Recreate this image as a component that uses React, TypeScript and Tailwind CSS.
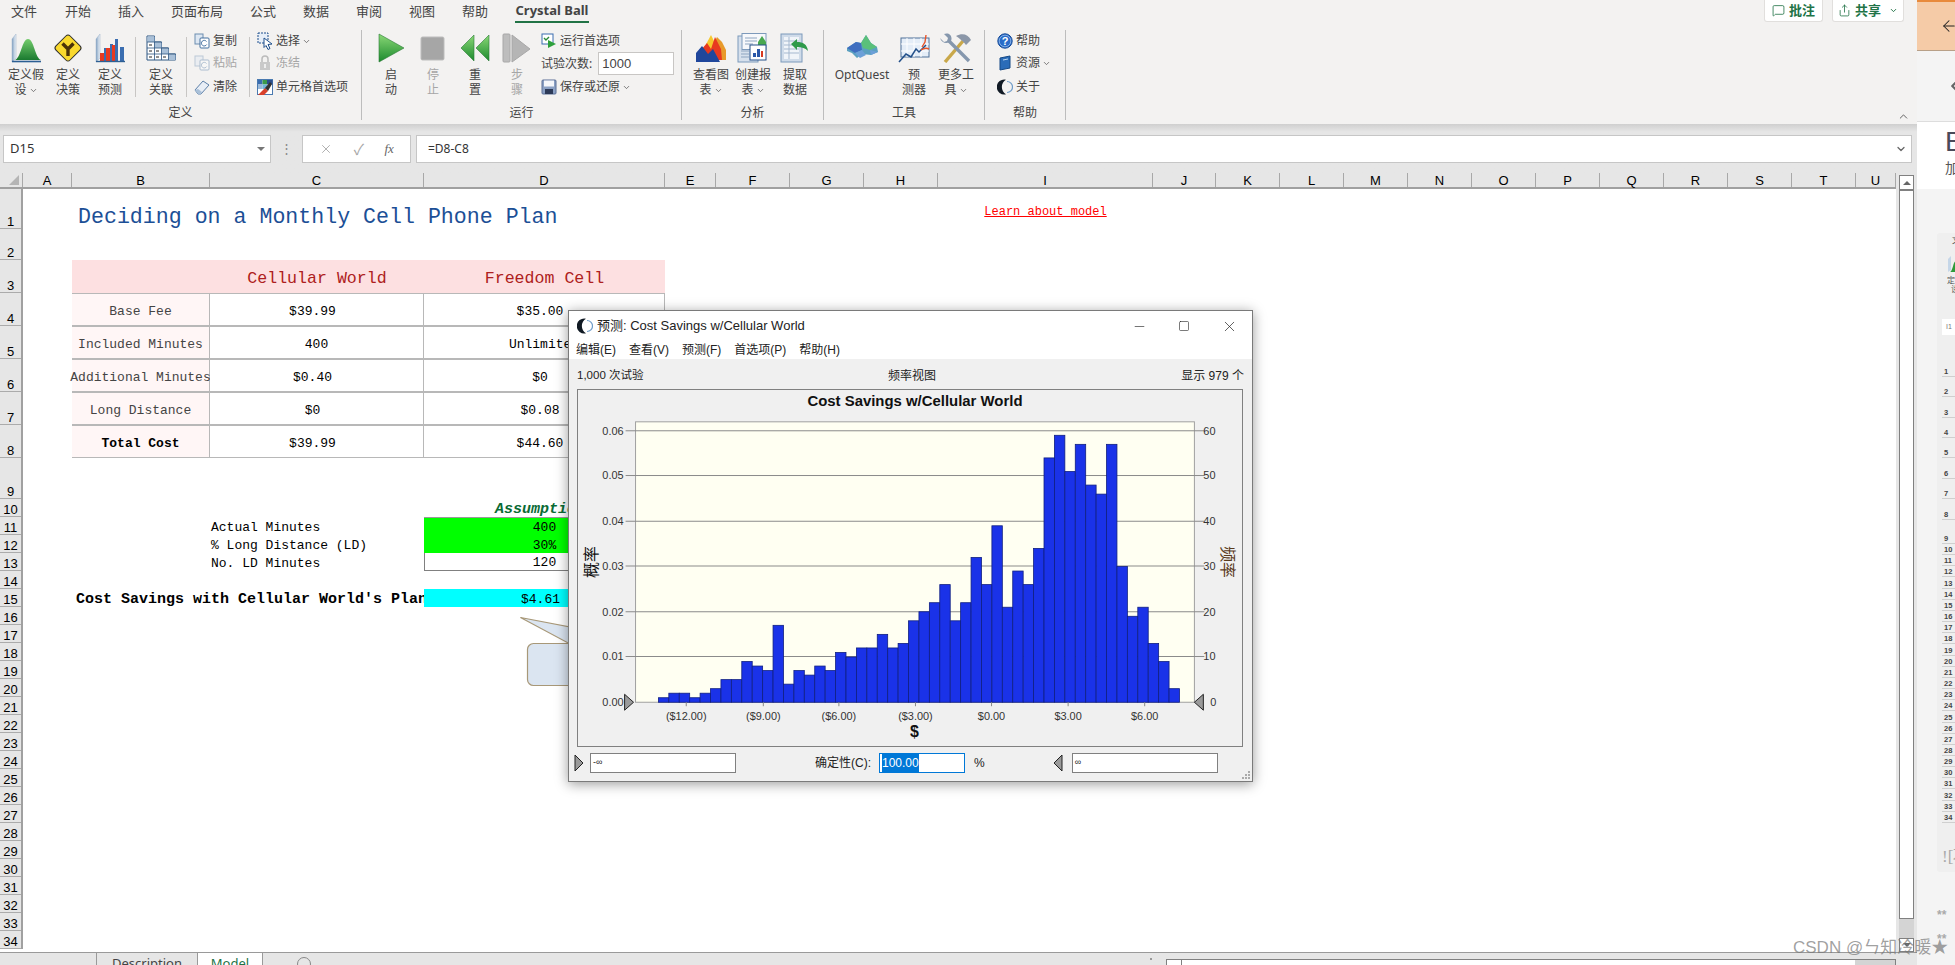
import { ChevronDown, ChevronUp, ArrowLeft, ChevronLeft, MessageSquare, Share, Minus, Square, X } from "lucide-react"

const ui = "font-['Noto_Sans','Noto_Sans_CJK_SC',sans-serif]"
const win = "font-['Liberation_Sans','Noto_Sans_CJK_SC',sans-serif]"
const mono = "font-['Liberation_Mono','Noto_Sans_CJK_SC',monospace]"

const Box = ({ w = 30, h = 30, children }: { w?: number; h?: number; children: React.ReactNode }) => (
  <svg width={w} height={h} viewBox={`0 0 ${w} ${h}`} className="shrink-0">
    {children}
  </svg>
)

const AssumeIcon = () => (
  <Box>
    <defs>
      <linearGradient id="gb" x1="0" x2="0" y1="0" y2="1">
        <stop offset="0" stopColor="#74cc6c" />
        <stop offset="1" stopColor="#1a7a30" />
      </linearGradient>
      <linearGradient id="pn" x1="0" x2="1" y1="0" y2="0">
        <stop offset="0" stopColor="#7f9fc0" />
        <stop offset="1" stopColor="#f0f5fa" />
      </linearGradient>
    </defs>
    <path d="M1 29V6L5 1v24z" fill="url(#pn)" stroke="#9db3ca" strokeWidth=".5" />
    <path d="M4 27C10 25 11 6 17 6s7 19 13 21z" fill="url(#gb)" />
    <path d="M1 28.500h29" stroke="#2d5f93" strokeWidth="1.6" />
  </Box>
)
const DecisionIcon = () => (
  <Box>
    <rect x="5" y="5" width="20" height="20" rx="3" transform="rotate(45 15 15)" fill="#f9d92e" stroke="#2a2a2a" strokeWidth="1" />
    <path d="M9.500 10.500l5.500 5.500v7M20.500 10.500l-5.500 5.500" stroke="#4a3208" strokeWidth="3.400" fill="none" />
  </Box>
)
const ForecastIcon = () => (
  <Box>
    <path d="M1 29V6L5 1v24z" fill="url(#pn)" stroke="#9db3ca" strokeWidth=".5" />
    <path d="M9 28V15h3v13zM15 28V11h3v17zM20 28V6h3v22zM25 28V14h4v14z" fill="#3a6db0" />
    <path d="M5 28V20h4v8zM11 28V15h4v13zM17 28V12h3v16z" fill="#e8391f" />
    <path d="M1 28.500h29" stroke="#2d5f93" strokeWidth="1.400" />
  </Box>
)
const CorrIcon = () => (
  <Box>
    <path d="M1 3h7.500v6H15.500v6H22.500v6H29.500v6H1z" fill="#fff" stroke="#2d5682" strokeWidth="1" />
    <path d="M1.500 3.500h7v5.500h-7zM8.500 9.500h7v5.500h-7zM15.500 15.500h7v5.500h-7zM22.500 21.500h7v5.500h-7z" fill="#a9c0d8" />
    <path d="M1 9h14.500M1 15h21.500M1 21h28.500M8.500 9v18M15.500 15v12M22.500 21v6" stroke="#2d5682" strokeWidth=".8" fill="none" />
    <path d="M3 12h3M3 18h3M10 18h3M3 24h3M10 24h3M17 24h3" stroke="#222" />
  </Box>
)
const CopyIcon = ({ off }: { off?: boolean }) => (
  <Box w={16} h={16}>
    <g opacity={off ? 0.4 : 1}>
      <rect x="1" y="1" width="8" height="10" fill="#dde7f2" stroke="#6c8db0" />
      <rect x="6" y="5" width="9" height="10" rx="1" fill="#fff" stroke="#44709f" />
      <path d="M12.500 8.500a2.800 2.800 0 10.200 3" fill="none" stroke="#44709f" />
    </g>
  </Box>
)
const EraserIcon = () => (
  <Box w={16} h={16}>
    <path d="M1 11l8-9 6 4-8 9H4z" fill="#e8eef6" stroke="#5c7fa8" />
    <path d="M1 11l3 4h3l1-2-4-3z" fill="#a9c0d8" />
  </Box>
)
const SelectIcon = () => (
  <Box w={16} h={18}>
    <rect x="1" y="1" width="10" height="10" fill="#e6eef8" stroke="#1d4f8c" strokeDasharray="2 1" />
    <path d="M7 6l8 6-4 .5 2 4-2 1-2-4-2 2z" fill="#fff" stroke="#1d4f8c" />
  </Box>
)
const LockIcon = () => (
  <Box w={16} h={16}>
    <rect x="3" y="7" width="10" height="8" fill="#c9c9c9" />
    <rect x="7" y="9" width="2" height="4" fill="#eee" />
    <path d="M5 7V4a3 3 0 016 0v3" fill="none" stroke="#bbb" strokeWidth="1.500" />
  </Box>
)
const CellPrefIcon = () => (
  <Box w={16} h={18}>
    <rect x=".5" y="1.500" width="15" height="15" fill="#fff" stroke="#4a7ab0" />
    <path d="M1 2h4.500v4.500H1z" fill="#3a6db0" />
    <path d="M5.500 2H10v4.500H5.500z" fill="#3b9a4a" />
    <path d="M10 2h5.500v4.500H10z" fill="#2b4f8c" />
    <path d="M1 6.500h4.500V11H1z" fill="#9ab8d8" />
    <path d="M5.500 6.500H10V11H5.500z" fill="#6fb4d8" />
    <path d="M1 17l7-7 3 3-4 4z" fill="#d8402a" />
    <path d="M8 10l5-6 2 2-4 7z" fill="#333" />
  </Box>
)
const PlayIcon = () => (
  <Box>
    <defs>
      <linearGradient id="gp" x1="0" x2="0" y1="0" y2="1">
        <stop offset="0" stopColor="#8ad876" />
        <stop offset="1" stopColor="#1c8a2e" />
      </linearGradient>
    </defs>
    <path d="M3 1l25 14L3 29z" fill="url(#gp)" stroke="#2a7a35" strokeWidth=".6" />
  </Box>
)
const StopIcon = () => (
  <Box>
    <rect x="3" y="4" width="23" height="23" rx="1.500" fill="#a6a6a6" stroke="#bdbdbd" />
  </Box>
)
const ResetIcon = () => (
  <Box>
    <path d="M14 2L1 15l13 13z" fill="url(#gp)" stroke="#2a7a35" strokeWidth=".6" />
    <path d="M29 2L16 15l13 13z" fill="url(#gp)" stroke="#2a7a35" strokeWidth=".6" />
  </Box>
)
const StepIcon = () => (
  <Box>
    <rect x="1" y="1" width="7" height="28" rx="1" fill="#bdbdbd" stroke="#a8a8a8" />
    <path d="M10 2l18 14-18 13z" fill="#b5b5b5" stroke="#a8a8a8" />
  </Box>
)
const RunPrefIcon = () => (
  <Box w={16} h={16}>
    <rect x="1" y="1" width="11" height="10" fill="#fff" stroke="#3a6db0" />
    <path d="M3 5l2 2 3-3" fill="none" stroke="#2a8a3a" strokeWidth="1.400" />
    <path d="M7 7l8 4-8 4z" fill="#2ea03c" />
  </Box>
)
const FloppyIcon = () => (
  <Box w={16} h={16}>
    <rect x="1" y="1" width="14" height="14" rx="1" fill="#8aa0c4" stroke="#5a6f96" />
    <rect x="3" y="1.500" width="10" height="6" fill="#f4f6fa" />
    <rect x="4" y="10" width="8" height="5" fill="#2c3a58" />
  </Box>
)
const FlameIcon = () => (
  <Box w={32} h={30}>
    <path d="M19 10l3-6 5 5 4 8v10H19z" fill="#e89a2a" />
    <path d="M9 15l7-13 4 8 1 17H9z" fill="#f6c92e" />
    <path d="M6 17l6-7 4 6 4-12 6 12 1 11H6z" fill="#e8391f" />
    <path d="M1 29V20l6-7 6 8 5-5 7 13z" fill="#20479c" />
  </Box>
)
const ReportIcon = () => (
  <Box w={32} h={30}>
    <rect x="1" y="3" width="20" height="26" fill="#d6e0ec" stroke="#7d9abb" />
    <rect x="5" y=".5" width="24" height="16" fill="#f6f8fb" stroke="#7d9abb" />
    <path d="M8 5h12M8 8h12M8 11h8M4 18h8M4 21h8M4 24h8" stroke="#8ea5c0" />
    <path d="M21 9l4-6 4 6v4h-8z" fill="#48a850" />
    <rect x="13" y="12" width="16" height="15" fill="#fff" stroke="#24518a" />
    <path d="M16 24v-4h3v4zM20 24v-8h3v8z" fill="#2a57a8" />
    <path d="M24 24v-6h2v6z" fill="#d83a22" />
  </Box>
)
const ExtractIcon = () => (
  <Box w={30} h={30}>
    <rect x="1" y="1" width="21" height="28" fill="#cfdbe9" stroke="#7d9abb" />
    <rect x="4" y="4" width="15" height="22" fill="#f0f4f9" />
    <path d="M4 8h15M4 12h15M4 16h15M4 20h15M9 4v22" stroke="#a5b8cf" />
    <path d="M11 11l6-5v3c6 0 10 2 11 9-3-3-6-4-11-4v3z" fill="#2e9a4a" />
  </Box>
)
const OptIcon = () => (
  <Box w={34} h={30}>
    <path d="M2 15l9-6 5 1 5-8 5 8 6 4 1 5-7 3-9-1-5 4-5-5-5-2z" fill="#5aa0c0" />
    <path d="M16 10l5-8 5 8 6 4-7 3-7-2z" fill="#5ac07a" />
    <path d="M2 15l9-6 5 1 1 7-7 3z" fill="#3f6ec0" />
    <path d="M10 20l7-3 4 5-6 3zM25 17l8 2-7 3z" fill="#6ca0d8" />
  </Box>
)
const PredictIcon = () => (
  <Box w={32} h={30}>
    <rect x="3" y="5" width="28" height="19" fill="#e4edf7" stroke="#4f7199" />
    <path d="M9 5v19M16 5v19M23 5v19M3 11h28M3 18h28" stroke="#fff" />
    <path d="M1 29l7-8 5 3 5-8 3 3 7-7" fill="none" stroke="#24518a" strokeWidth="1.500" />
    <path d="M24 14l3-5 1-7M23 17c3-2 6-2 8-1" fill="none" stroke="#e8552a" strokeWidth="1.400" />
  </Box>
)
const ToolsIcon = () => (
  <Box w={34} h={30}>
    <path d="M6 29L24 8" stroke="#c9a84a" strokeWidth="3.400" />
    <path d="M17 3c6-3 12-2 15 4l-5 5c-3-4-6-6-10-9z" fill="#8b97a8" />
    <path d="M30 28L10 8" stroke="#8597ad" strokeWidth="3.400" />
    <path d="M1 5l4 4 3-1 1-3-4-4c5-2 9 2 7 7-3 3-9 3-11-3z" fill="#8597ad" />
  </Box>
)
const HelpIcon = () => (
  <Box w={16} h={16}>
    <circle cx="8" cy="8" r="7.200" fill="#2a6cc8" stroke="#174a96" />
    <circle cx="8" cy="8" r="5.800" fill="none" stroke="#a8c8f0" strokeWidth=".7" />
    <text x="8" y="12" textAnchor="middle" fontSize="11" fill="#fff" fontWeight="700" fontFamily="Liberation Sans">?</text>
  </Box>
)
const BookIcon = () => (
  <Box w={16} h={16}>
    <path d="M3 3l10-2v12L3 15z" fill="#2a6cb8" stroke="#174a86" />
    <path d="M6 5l5-1" stroke="#bcd6f0" />
  </Box>
)
const BallIcon = ({ s = 16 }: { s?: number }) => (
  <svg width={s} height={s} viewBox="0 0 16 16" className="shrink-0">
    <path d="M9 .7A7.500 7.500 0 1 0 9 15.300 8.500 8.500 0 0 1 9 .7z" fill="#111a24" />
    <path d="M10 2.500a5.500 5.500 0 0 1 0 11" fill="none" stroke="#6f9cc8" strokeWidth="1.200" />
  </svg>
)

const Chev = () => <ChevronDown size={9} strokeWidth={2} className="ml-[2px] mb-[1px] inline text-[#555]" />

const Big = ({
  icon,
  a,
  b,
  off,
  w = "w-[42px]",
  chev,
}: {
  icon: React.ReactNode
  a: string
  b?: string
  off?: boolean
  w?: string
  chev?: boolean
}) => (
  <div className={`${w} flex shrink-0 flex-col items-center pt-[3px] text-[12px] leading-[15px] ${off ? "text-[#a6a6a6]" : "text-[#444]"}`}>
    <div className="flex h-[30px] items-center justify-center">{icon}</div>
    <div className="mt-[4px] whitespace-nowrap">{a}</div>
    {b && (
      <div className="whitespace-nowrap">
        {b}
        {chev && <Chev />}
      </div>
    )}
  </div>
)

const Small = ({ icon, label, off, chev }: { icon: React.ReactNode; label: string; off?: boolean; chev?: boolean }) => (
  <div className={`flex h-[22px] items-center gap-[3px] whitespace-nowrap text-[12px] ${off ? "text-[#a6a6a6]" : "text-[#444]"}`}>
    {icon}
    <span>
      {label}
      {chev && <Chev />}
    </span>
  </div>
)

const Divider = () => <div className="mx-[4px] mt-[7px] h-[60px] w-px shrink-0 bg-[#c8c6c4]" />

const Group = ({ w, label, pad, children }: { w: string; label: string; pad: string; children: React.ReactNode }) => (
  <div className={`${w} flex h-[90px] shrink-0 flex-col border-r border-[#bdbdbd]`}>
    <div className={`${pad} flex h-[76px]`}>{children}</div>
    <div className="text-center text-[12px] leading-[14px] text-[#444]">{label}</div>
  </div>
)

const tabs = [
  { t: "文件", w: "w-[54px]" },
  { t: "开始", w: "w-[53px]" },
  { t: "插入", w: "w-[53px]" },
  { t: "页面布局", w: "w-[79px]" },
  { t: "公式", w: "w-[53px]" },
  { t: "数据", w: "w-[53px]" },
  { t: "审阅", w: "w-[53px]" },
  { t: "视图", w: "w-[53px]" },
  { t: "帮助", w: "w-[53px]" },
]

const Ribbon = () => (
  <div className={`${ui} relative h-[124px] bg-[#f3f2f1]`}>
    <div className="flex h-[24px] pl-[11px] text-[13px] text-[#444]">
      {tabs.map((t) => (
        <div key={t.t} className={`${t.w} pt-[1px] leading-[20px]`}>
          {t.t}
        </div>
      ))}
      <div className="h-[23px] w-[74px] whitespace-nowrap border-b-[2px] border-[#217346] text-center font-bold leading-[21px]">Crystal Ball</div>
    </div>
    <div className="mt-[6px] flex">
      <Group w="w-[362px]" label="定义" pad="pl-[5px]">
        <Big icon={<AssumeIcon />} a="定义假" b="设" chev />
        <Big icon={<DecisionIcon />} a="定义" b="决策" />
        <Big icon={<ForecastIcon />} a="定义" b="预测" />
        <Divider />
        <Big icon={<CorrIcon />} a="定义" b="关联" />
        <Divider />
        <div className="w-[54px] shrink-0 pl-[3px]">
          <Small icon={<CopyIcon />} label="复制" />
          <Small icon={<CopyIcon off />} label="粘贴" off />
          <div className="mt-[2px]">
            <Small icon={<EraserIcon />} label="清除" />
          </div>
        </div>
        <Divider />
        <div className="shrink-0 pl-[3px]">
          <Small icon={<SelectIcon />} label="选择" chev />
          <Small icon={<LockIcon />} label="冻结" off />
          <div className="mt-[2px]">
            <Small icon={<CellPrefIcon />} label="单元格首选项" />
          </div>
        </div>
      </Group>
      <Group w="w-[320px]" label="运行" pad="pl-[8px]">
        <Big icon={<PlayIcon />} a="启" b="动" />
        <Big icon={<StopIcon />} a="停" b="止" off />
        <Big icon={<ResetIcon />} a="重" b="置" />
        <Big icon={<StepIcon />} a="步" b="骤" off />
        <div className="shrink-0 pl-[3px]">
          <Small icon={<RunPrefIcon />} label="运行首选项" />
          <div className="flex h-[23px] items-center whitespace-nowrap text-[12px] text-[#444]">
            试验次数:
            <div className="ml-[6px] flex h-[23px] w-[76px] items-center border border-[#c8c6c4] bg-white pl-[3px] font-['Liberation_Sans'] text-[13px]">1000</div>
          </div>
          <div className="mt-[1px]">
            <Small icon={<FloppyIcon />} label="保存或还原" chev />
          </div>
        </div>
      </Group>
      <Group w="w-[142px]" label="分析" pad="pl-[8px]">
        <Big icon={<FlameIcon />} a="查看图" b="表" chev />
        <Big icon={<ReportIcon />} a="创建报" b="表" chev />
        <Big icon={<ExtractIcon />} a="提取" b="数据" />
      </Group>
      <Group w="w-[161px]" label="工具" pad="pl-[10px]">
        <Big icon={<OptIcon />} a="OptQuest" w="w-[56px]" />
        <div className="w-[3px]" />
        <Big icon={<PredictIcon />} a="预" b="测器" />
        <Big icon={<ToolsIcon />} a="更多工" b="具" chev />
      </Group>
      <Group w="w-[81px]" label="帮助" pad="pl-[12px]">
        <div className="shrink-0">
          <Small icon={<HelpIcon />} label="帮助" />
          <Small icon={<BookIcon />} label="资源" chev />
          <div className="mt-[2px]">
            <Small icon={<BallIcon />} label="关于" />
          </div>
        </div>
      </Group>
    </div>
    <div className="absolute right-[13px] top-0 flex gap-[9px] text-[#217346]">
      <div className="flex h-[22px] w-[59px] items-center justify-center gap-[4px] rounded-b-[3px] border border-t-0 border-[#e1dfdd] bg-white text-[13px] font-bold">
        <MessageSquare size={13} strokeWidth={1.5} />
        批注
      </div>
      <div className="flex h-[22px] w-[72px] items-center justify-center gap-[4px] rounded-b-[3px] border border-t-0 border-[#e1dfdd] bg-white text-[13px] font-bold">
        <Share size={13} strokeWidth={1.5} />
        共享
        <ChevronDown size={9} strokeWidth={2.5} className="ml-[4px]" />
      </div>
    </div>
    <ChevronUp size={13} strokeWidth={1.5} className="absolute bottom-[1px] right-[7px] text-[#444]" />
  </div>
)

const FormulaBar = () => (
  <div className="h-[49px] bg-[#e6e6e6] bg-gradient-to-b from-[#cfcfcf] to-[#e6e6e6] to-[16%] pl-[3px] pt-[11px]">
    <div className={`${ui} flex h-[28px] text-[13px] text-[#333]`}>
      <div className="flex w-[268px] items-center justify-between border border-[#c6c6c6] bg-white pl-[6px] pr-[5px]">
        D15
        <div className="h-0 w-0 border-x-[4px] border-t-[4px] border-x-transparent border-t-[#777]" />
      </div>
      <div className="flex w-[31px] items-center justify-center text-[#888]">⋮</div>
      <div className="flex w-[109px] items-center justify-around border border-[#c6c6c6] bg-white px-[6px] text-[#a6a6a6]">
        <X size={14} strokeWidth={1.5} />
        <span className="text-[15px]">✓</span>
        <span className="font-['Liberation_Serif'] text-[13px] italic text-[#666]">fx</span>
      </div>
      <div className="ml-[5px] flex w-[1496px] items-center justify-between border border-[#c6c6c6] bg-white pl-[11px] pr-[4px] text-[12px]">
        =D8-C8
        <ChevronDown size={12} strokeWidth={2.5} className="text-[#666]" />
      </div>
    </div>
  </div>
)

const colHeads = [
  { c: "A", w: "w-[49px]" },
  { c: "B", w: "w-[138px]" },
  { c: "C", w: "w-[214px]" },
  { c: "D", w: "w-[241px]" },
  { c: "E", w: "w-[51px]" },
  { c: "F", w: "w-[74px]" },
  { c: "G", w: "w-[74px]" },
  { c: "H", w: "w-[74px]" },
  { c: "I", w: "w-[215px]" },
  { c: "J", w: "w-[63px]" },
  ...["K", "L", "M", "N", "O", "P", "Q", "R", "S", "T"].map((c) => ({ c, w: "w-[64px]" })),
  { c: "U", w: "w-[40px]" },
]

const rowHeads = [
  { n: 1, h: "h-[40px]" },
  { n: 2, h: "h-[31px]" },
  ...[3, 4, 5, 6, 7, 8].map((n) => ({ n, h: "h-[33px]" })),
  { n: 9, h: "h-[41px]" },
  ...Array.from({ length: 25 }, (_, i) => ({ n: i + 10, h: "h-[18px]" })),
]

const tableRows = [
  { r: "row-start-4", l: "Base Fee", a: "$39.99", b: "$35.00" },
  { r: "row-start-5", l: "Included Minutes", a: "400", b: "Unlimited", plain: true },
  { r: "row-start-6", l: "Additional Minutes", a: "$0.40", b: "$0" },
  { r: "row-start-7", l: "Long Distance", a: "$0", b: "$0.08" },
  { r: "row-start-8", l: "Total Cost", a: "$39.99", b: "$44.60", bold: true },
]

const Sheet = () => (
  <div className={`${win} flex h-[779px] bg-[#e6e6e6]`}>
    <div className="w-[1896px] shrink-0">
      <div className="flex h-[16px] border-b-[2px] border-[#a0a0a0] bg-[#e6e6e6] text-[13px] leading-[16px] text-black">
        <div className="relative w-[23px] shrink-0 border-r border-[#a8a8a8]">
          <div className="absolute bottom-[2px] right-[3px] h-0 w-0 border-b-[10px] border-l-[10px] border-b-[#b5b5b5] border-l-transparent" />
        </div>
        {colHeads.map((h) => (
          <div key={h.c} className={`${h.w} shrink-0 border-r border-[#a8a8a8] text-center`}>
            {h.c}
          </div>
        ))}
      </div>
      <div className="flex h-[760px]">
        <div className="w-[23px] shrink-0 border-r-[2px] border-[#a0a0a0]">
          {rowHeads.map((r) => (
            <div key={r.n} className={`${r.h} flex items-end justify-center border-b border-[#ababab] text-[13px] leading-[13px] text-black`}>
              {r.n}
            </div>
          ))}
        </div>
        <div className={`${mono} grid h-[760px] flex-1 grid-cols-[49px_138px_214px_241px_51px_74px_74px_74px_215px_63px] grid-rows-[40px_31px_33px_33px_33px_33px_33px_33px_41px_repeat(25,18px)] bg-white text-[13px] text-black`}>
          <div className="col-start-2 col-span-3 row-start-1 flex items-center whitespace-nowrap pl-[6px] pt-[17px] text-[21.6px] text-[#1c4f96]">
            Deciding on a Monthly Cell Phone Plan
          </div>
          <div className="col-start-9 row-start-1 flex items-center justify-center pt-[5px] text-[12px] text-[#f00] underline">Learn about model</div>
          <div className="col-start-2 row-start-3 bg-[#fde0e1]" />
          <div className="col-start-3 row-start-3 flex items-center justify-center bg-[#fde0e1] pt-[6px] text-[16.6px] text-[#ae2020]">Cellular World</div>
          <div className="col-start-4 row-start-3 flex items-center justify-center bg-[#fde0e1] pt-[6px] text-[16.6px] text-[#ae2020]">Freedom Cell</div>
          {tableRows.map((r) => [
            <div key={r.l} className={`${r.r} col-start-2 flex items-center justify-center whitespace-nowrap border-y-[0.5px] border-r border-[#b8b8b8] bg-[#fff6f6] pt-[4px] ${r.bold ? "font-bold text-black" : "text-[#444]"}`}>
              {r.l}
            </div>,
            <div key={r.l + "a"} className={`${r.r} col-start-3 flex items-center justify-center border-y-[0.5px] border-r border-[#b8b8b8] bg-white pt-[4px] ${r.plain ? "" : "pr-[8px]"}`}>
              {r.a}
            </div>,
            <div key={r.l + "b"} className={`${r.r} col-start-4 flex items-center justify-center border-y-[0.5px] border-r border-[#b8b8b8] bg-white pt-[4px] ${r.plain ? "" : "pr-[8px]"}`}>
              {r.b}
            </div>,
          ])}
          <div className="col-start-4 row-start-10 flex items-center justify-center pt-[4px] text-[15px] font-bold italic leading-[14px] text-[#0a6b35]">Assumptions</div>
          <div className="col-start-3 row-start-11 flex items-center pl-[1px] pt-[3px] leading-[14px]">Actual Minutes</div>
          <div className="col-start-3 row-start-12 flex items-center pl-[1px] pt-[3px] leading-[14px]">% Long Distance (LD)</div>
          <div className="col-start-3 row-start-13 flex items-center pl-[1px] pt-[3px] leading-[14px]">No. LD Minutes</div>
          <div className="col-start-4 row-start-11 flex items-center justify-center border-t border-[#999] bg-[#00ff00] pt-[3px] leading-[14px]">400</div>
          <div className="col-start-4 row-start-12 flex items-center justify-center bg-[#00ff00] pt-[3px] leading-[14px]">30%</div>
          <div className="col-start-4 row-start-13 flex items-center justify-center border-x border-b border-[#808080] bg-white pt-[3px] leading-[14px]">120</div>
          <div className="col-start-2 col-span-2 row-start-15 flex items-center overflow-hidden whitespace-nowrap pl-[4px] pt-[3px] text-[15px] font-bold leading-[14px]">
            Cost Savings with Cellular World's Plan
          </div>
          <div className="col-start-4 row-start-15 flex items-center justify-center bg-[#00ffff] pr-[8px] pt-[3px] leading-[14px]">$4.61</div>
        </div>
      </div>
      <div className="h-[3px] bg-white" />
    </div>
    <div className="ml-[3px] w-[15px] shrink-0">
      <div className="mt-[2px] flex h-[15px] items-center justify-center border border-[#808080] bg-white">
        <div className="h-0 w-0 border-x-[4px] border-b-[4px] border-x-transparent border-b-[#666]" />
      </div>
      <div className="h-[729px] border border-[#808080] bg-white" />
      <div className="h-[19px] bg-[#d4d4d4]" />
      <div className="flex h-[14px] items-center justify-center border border-[#808080] bg-white">
        <div className="h-0 w-0 border-x-[4px] border-t-[4px] border-x-transparent border-t-[#666]" />
      </div>
    </div>
  </div>
)

const SheetTabs = () => (
  <div className={`${ui} flex h-[13px] items-start overflow-hidden border-t border-[#9a9a9a] bg-[#e6e6e6] text-[13px] leading-[20px] text-[#444]`}>
    <div className="h-[13px] w-[97px] border-r border-[#9a9a9a]" />
    <div className="w-[100px] pl-[15px]">Description</div>
    <div className="h-[13px] w-[66px] border-x border-[#9a9a9a] bg-white text-center text-[#217346]">Model</div>
    <div className="ml-[34px] mt-[4px] h-[14px] w-[14px] rounded-full border border-[#888]" />
    <div className="ml-[839px] mt-[5px] h-[2px] w-[2px] bg-[#999]" />
    <div className="ml-[14px] mt-[6px] flex h-[8px] w-[730px] border-x border-t border-[#808080] bg-white">
      <div className="w-[15px] border-r border-[#808080]" />
      <div className="ml-[673px] h-[8px] w-[41px] bg-[#d4d4d4]" />
    </div>
  </div>
)

const counts = [1, 2, 2, 1, 2, 3, 5, 5, 9, 8, 7, 17, 4, 7, 6, 8, 7, 11, 10, 12, 12, 15, 12, 13, 18, 20, 22, 26, 18, 22, 32, 26, 39, 21, 29, 26, 34, 54, 59, 51, 57, 48, 46, 57, 30, 19, 21, 13, 9, 3]
const gridY = [
  { p: "0.06", f: "60", y: 430 },
  { p: "0.05", f: "50", y: 475 },
  { p: "0.04", f: "40", y: 521 },
  { p: "0.03", f: "30", y: 566 },
  { p: "0.02", f: "20", y: 612 },
  { p: "0.01", f: "10", y: 657 },
]
const ticksX = [
  { t: "($12.00)", x: 686 },
  { t: "($9.00)", x: 763.5 },
  { t: "($6.00)", x: 839.5 },
  { t: "($3.00)", x: 916.5 },
  { t: "$0.00", x: 993 },
  { t: "$3.00", x: 1070 },
  { t: "$6.00", x: 1147 },
]

const Chart = () => (
  <svg viewBox="578 389 666 358" width={666} height={358} className="block border border-[#808080] bg-[#f0f0f0]" fontFamily="Liberation Sans, Noto Sans CJK SC, sans-serif">
    <text x={916} y={405} textAnchor="middle" fontSize={15} fontWeight={700} fill="#111">
      Cost Savings w/Cellular World
    </text>
    <rect x={635} y={421} width={562} height={282} fill="#fffff2" stroke="#a0a0a0" />
    {gridY.map((g) => (
      <g key={g.p} fontSize={11} fill="#333">
        <path d={`M625 ${g.y}H1207`} stroke="#8a8a8a" />
        <text x={623} y={g.y + 4} textAnchor="end">
          {g.p}
        </text>
        <text x={1206} y={g.y + 4}>
          {g.f}
        </text>
      </g>
    ))}
    <text x={623} y={707} textAnchor="end" fontSize={11} fill="#333">
      0.00
    </text>
    <text x={1213} y={707} fontSize={11} fill="#333">
      0
    </text>
    {counts.map((c, i) => (
      <rect key={i} x={658 + i * 10.48} y={703 - c * 4.55} width={10.48} height={c * 4.55} fill="#1a32e8" stroke="#101f80" strokeWidth={0.8} />
    ))}
    {ticksX.map((t) => (
      <g key={t.t}>
        <path d={`M${t.x} 703v4`} stroke="#888" />
        <text x={t.x} y={721} textAnchor="middle" fontSize={11} fill="#333">
          {t.t}
        </text>
      </g>
    ))}
    <text x={915.5} y={738} textAnchor="middle" fontSize={16} fontWeight={700} fill="#111">
      $
    </text>
    <text transform="translate(596 562) rotate(-90)" textAnchor="middle" fontSize={16} fill="#111">
      概率
    </text>
    <text transform="translate(1225 562) rotate(90)" textAnchor="middle" fontSize={16} fill="#5a3a1c">
      频率
    </text>
    <path d="M624 695l9 8-9 8z" fill="#9a9a9a" stroke="#222" />
    <path d="M1206 695l-9 8 9 8z" fill="#9a9a9a" stroke="#222" />
  </svg>
)

const Field = ({ text }: { text: string }) => (
  <div className="flex h-[20px] w-[146px] items-center border border-[#808080] bg-white pl-[2px] text-[9px] text-[#222]">{text}</div>
)
const Tri = ({ left }: { left?: boolean }) => (
  <svg width={10} height={16} viewBox="0 0 10 16" className="shrink-0">
    <path d={left ? "M9 0L1 8l8 8z" : "M1 0l8 8-8 8z"} fill="#9a9a9a" stroke="#222" />
  </svg>
)

const Window = () => (
  <div className={`${win} absolute left-[568px] top-[310px] flex h-[472px] w-[685px] flex-col border border-[#7a7a7a] bg-[#f0f0f0] text-[12px] text-[#222] shadow-[0_2px_12px_rgba(0,0,0,0.4)]`}>
    <div className="flex h-[30px] items-center bg-white pl-[8px] text-[13px]">
      <BallIcon />
      <span className="ml-[4px]">预测: Cost Savings w/Cellular World</span>
      <div className="ml-auto flex items-center gap-[31px] pr-[14px]">
        <Minus size={15} strokeWidth={1} />
        <Square size={12} strokeWidth={1.2} />
        <X size={17} strokeWidth={1} />
      </div>
    </div>
    <div className="flex h-[18px] items-center gap-[13px] bg-white pl-[7px]">
      <span>编辑(E)</span>
      <span>查看(V)</span>
      <span>预测(F)</span>
      <span>首选项(P)</span>
      <span>帮助(H)</span>
    </div>
    <div className="flex h-[30px] items-center justify-between px-[8px] pt-[4px]">
      <span className="w-[120px] text-[11.5px]">1,000 次试验</span>
      <span className="ml-[3px]">频率视图</span>
      <span className="w-[120px] text-right">显示 979 个</span>
    </div>
    <div className="px-[8px]">
      <Chart />
    </div>
    <div className="relative mt-[6px] flex h-[20px] items-center pl-[5px]">
      <Tri />
      <div className="ml-[6px]">
        <Field text="-∞" />
      </div>
      <span className="ml-[79px] w-[64px] whitespace-nowrap">确定性(C):</span>
      <div className="flex h-[20px] w-[86px] items-center border border-[#0078d7] bg-white pl-[2px]">
        <span className="bg-[#0078d7] text-white">100.00</span>
      </div>
      <span className="ml-[9px]">%</span>
      <div className="ml-[68px]">
        <Tri left />
      </div>
      <div className="ml-[9px]">
        <Field text="∞" />
      </div>
    </div>
    <div className="absolute bottom-[2px] right-[2px] grid grid-cols-3 gap-[1px]">
      <i />
      <i />
      <i className="h-[2px] w-[2px] bg-[#aaa]" />
      <i />
      <i className="h-[2px] w-[2px] bg-[#aaa]" />
      <i className="h-[2px] w-[2px] bg-[#aaa]" />
      <i className="h-[2px] w-[2px] bg-[#aaa]" />
      <i className="h-[2px] w-[2px] bg-[#aaa]" />
      <i className="h-[2px] w-[2px] bg-[#aaa]" />
    </div>
  </div>
)

const miniRows = [
  { n: 1, h: "h-[20px]" },
  { n: 2, h: "h-[20px]" },
  { n: 3, h: "h-[21px]" },
  { n: 4, h: "h-[20px]" },
  { n: 5, h: "h-[20px]" },
  { n: 6, h: "h-[21px]" },
  { n: 7, h: "h-[20px]" },
  { n: 8, h: "h-[21px]" },
  { n: 9, h: "h-[24px]" },
  ...Array.from({ length: 25 }, (_, i) => ({ n: i + 10, h: "h-[11.170px]" })),
]

const SidePanel = () => (
  <div className={`${win} relative h-[965px] w-[38px] shrink-0 overflow-hidden bg-[#f4f4f4]`}>
    <div className="flex h-[51px] items-center border-b border-[#b8a088] border-t-[2px] border-t-[#e88a3c] bg-[#f5cba7] pl-[23px]">
      <ArrowLeft size={18} strokeWidth={1.4} className="shrink-0 text-[#222]" />
    </div>
    <div className="flex h-[71px] items-center border-b border-[#dddddd] pl-[27px]">
      <ChevronLeft size={22} strokeWidth={2.4} className="shrink-0 text-[#666]" />
    </div>
    <div className="h-[67px] overflow-hidden whitespace-nowrap bg-white pl-[28px]">
      <div className="pt-[4px] text-[28px] leading-[32px] text-[#4a4a5a]">B</div>
      <div className="text-[14px] leading-[20px] text-[#555]">加油</div>
    </div>
    <div className="ml-[20px] mt-[44px] h-[639px] w-[18px] overflow-hidden whitespace-nowrap rounded-l-[3px] bg-[#efefef] pl-[5px]">
      <div className="pl-[10px] pt-[2px] text-[8px] leading-[12px] text-[#555]">文</div>
      <div className="ml-[6px] mt-[9px]">
        <svg width={12} height={17} viewBox="0 0 12 17" className="block">
          <path d="M0 16V3l3-3v14z" fill="#c5d6e8" />
          <path d="M2 16C5 15 5 5 8 5s3 10 4 11z" fill="#2f9a3a" />
        </svg>
      </div>
      <div className="mt-[3px] pl-[5px] text-[8px] leading-[9px] text-[#555]">定义</div>
      <div className="pl-[9px] text-[8px] leading-[9px] text-[#555]">设</div>
      <div className="mt-[25px] flex h-[16px] w-[20px] items-center bg-white pl-[4px] text-[7px] text-[#777]">I1</div>
      <div className="mt-[22px]">
        {miniRows.map((r) => (
          <div key={r.n} className={`${r.h} flex items-end border-b border-[#cfcfcf] pl-[2px] text-[7.5px] font-bold leading-[9px] text-[#444]`}>
            {r.n}
          </div>
        ))}
      </div>
      <div className="mt-[24px] font-['Liberation_Serif'] text-[17px] leading-[20px] text-[#aaa]">![不</div>
    </div>
    <div className="ml-[20px] mt-[34px] whitespace-nowrap text-[12px] font-bold text-[#aaa]">**</div>
    <div className="ml-[20px] mt-[6px] whitespace-nowrap text-[12px] font-bold text-[#aaa]">**</div>
  </div>
)

export default function App() {
  return (
    <div className="relative flex h-[965px] w-[1955px] overflow-hidden bg-white">
      <div className="w-[1917px] shrink-0">
        <Ribbon />
        <FormulaBar />
        <Sheet />
        <SheetTabs />
      </div>
      <SidePanel />
      <svg width={70} height={100} viewBox="0 0 70 100" className="absolute left-[515px] top-[610px]">
        <path d="M5.500 7.500L60 18l-5 16z" fill="#dbe5f1" stroke="#a89878" strokeWidth="1.2" />
        <rect x="12.500" y="33.500" width="56" height="42" rx="6" fill="#dbe5f1" stroke="#a89878" strokeWidth="1.2" />
      </svg>
      <Window />
      <div className="absolute left-[1793px] top-[935px] whitespace-nowrap font-['Liberation_Sans','Noto_Sans_CJK_SC',sans-serif] text-[17px] text-[#777]/70">CSDN @ㄣ知冷暖★</div>
    </div>
  )
}
